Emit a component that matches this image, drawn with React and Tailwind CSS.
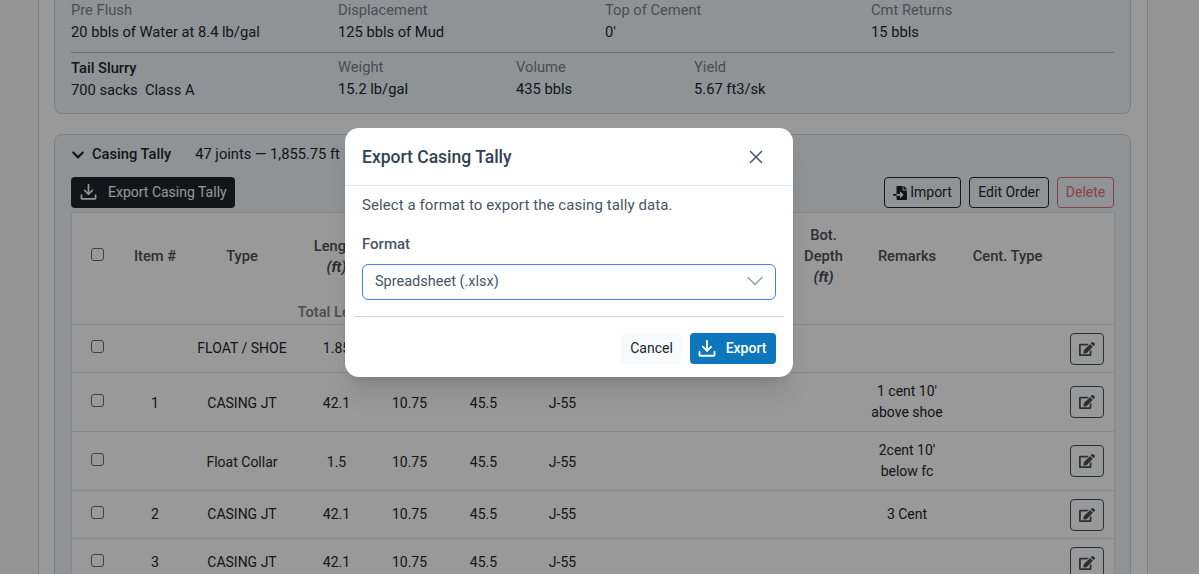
import { FaChevronDown, FaFileImport, FaEdit } from "react-icons/fa";
import { X, ChevronDown } from "lucide-react";

function DownloadIcon({ className }) {
  return (
    <svg className={className} viewBox="0 0 24 24" fill="none" stroke="currentColor" strokeWidth="2.4" strokeLinecap="round" strokeLinejoin="round">
      <path d="M12 1v13" />
      <path d="M6.5 9l5.5 5.5 5.5-5.5" />
      <path d="M2 15.5v4.5a1 1 0 0 0 1 1h18a1 1 0 0 0 1-1v-4.5" />
    </svg>
  );
}

const rows = [
  { h: "h-[48px]", item: "", type: "FLOAT / SHOE", len: "1.85", od: "", wt: "", grade: "", remarks: [] },
  { h: "h-[59px]", item: "1", type: "CASING JT", len: "42.1", od: "10.75", wt: "45.5", grade: "J-55", remarks: ["1 cent 10'", "above shoe"], text: "pt-[2px]" },
  { h: "h-[59px]", item: "", type: "Float Collar", len: "1.5", od: "10.75", wt: "45.5", grade: "J-55", remarks: ["2cent 10'", "below fc"], text: "pt-[2px]" },
  { h: "h-[48px]", item: "2", type: "CASING JT", len: "42.1", od: "10.75", wt: "45.5", grade: "J-55", remarks: ["3 Cent"] },
  { h: "h-[48px]", item: "3", type: "CASING JT", len: "42.1", od: "10.75", wt: "45.5", grade: "J-55", remarks: [] },
];

function Check() {
  return <input type="checkbox" className="block appearance-none w-[13px] h-[13px] mx-auto mb-1 rounded-[3px] border border-[#6b6b6b] bg-white" />;
}

function Field({ label, value }) {
  return (
    <div>
      <div className="text-[#7d8288]">{label}</div>
      <div className="mt-[1px] text-[#212529]">{value}</div>
    </div>
  );
}

export default function App() {
  return (
    <div className="relative h-[574px] overflow-hidden bg-[#f8f9fa] text-sm leading-[21px] font-['Roboto',sans-serif]">
      <div className="ml-[38px] w-[1110px] h-full border-x border-[#d8d8d8] bg-white pl-[15px] pr-[16px]">
        {/* cement details */}
        <div className="border-x border-b border-[#ced4da] rounded-b-lg bg-[#eff5fa] px-4 pb-[12px] text-[14.7px]">
          <div className="grid grid-cols-[267px_267px_266px_1fr] pb-[9px] border-b border-[#adb5bd]">
            <Field label="Pre Flush" value="20 bbls of Water at 8.4 lb/gal" />
            <Field label="Displacement" value="125 bbls of Mud" />
            <Field label="Top of Cement" value="0'" />
            <Field label="Cmt Returns" value="15 bbls" />
          </div>
          <div className="grid grid-cols-[267px_178px_178px_1fr] pt-[4px]">
            <div className="pt-[1px] text-[#212529]">
              <div className="font-medium">Tail Slurry</div>
              <div className="mt-[1px] whitespace-pre">700 sacks  Class A</div>
            </div>
            <Field label="Weight" value="15.2 lb/gal" />
            <Field label="Volume" value="435 bbls" />
            <Field label="Yield" value="5.67 ft3/sk" />
          </div>
        </div>

        {/* casing tally */}
        <div className="mt-[20px] border border-[#ced4da] rounded-lg bg-[#eff5fa] px-4 pt-[9px]">
          <div className="flex items-center h-[21px] text-[14.7px] text-[#212529]">
            <FaChevronDown className="w-[14px] h-[14px] mr-[7px]" />
            <span className="font-medium">Casing Tally</span>
            <span className="ml-6">47 joints — 1,855.75 ft</span>
          </div>
          <div className="flex items-center mt-[12px] h-[31px]">
            <button className="flex items-center h-[31px] w-[164px] pl-[9px] rounded-[4px] bg-[#212529] text-[#f8f9fa]">
              <DownloadIcon className="w-[17px] h-[17px] mr-[11px]" />
              Export Casing Tally
            </button>
            <div className="ml-auto flex gap-2">
              <button className="flex items-center justify-center gap-[3px] w-[77px] h-[31px] rounded-[4px] border border-[#212529] text-[#212529]">
                <FaFileImport className="w-[14px] h-[14px]" />
                Import
              </button>
              <button className="w-[80px] h-[31px] rounded-[4px] border border-[#212529] text-[#212529]">Edit Order</button>
              <button className="w-[57px] h-[31px] rounded-[4px] border border-[#dc3545] text-[#dc3545] opacity-70">Delete</button>
            </div>
          </div>
          <table className="mt-1 w-[1043px] table-fixed border-collapse border-t border-r border-l border-[#dee2e6] bg-white text-center text-[#212529]">
            <colgroup>
              <col className="w-[52px]" />
              <col className="w-[63px]" />
              <col className="w-[111px]" />
              <col className="w-[78px]" />
              <col className="w-[68px]" />
              <col className="w-[80px]" />
              <col className="w-[78px]" />
              <col className="w-[188px]" />
              <col className="w-[68px]" />
              <col className="w-[99px]" />
              <col className="w-[102px]" />
              <col className="w-[56px]" />
            </colgroup>
            <thead className="text-[14.7px] text-[#495057]">
              <tr className="h-[88px]">
                <th className="font-medium"><Check /></th>
                <th className="font-medium">Item #</th>
                <th className="font-medium">Type</th>
                <th className="font-medium">Length<br /><i className="font-bold">(ft)</i></th>
                <th className="font-medium">OD</th>
                <th className="font-medium">Wt</th>
                <th className="font-medium">Grade</th>
                <th></th>
                <th className="font-medium">Bot.<br />Depth<br /><i className="font-bold">(ft)</i></th>
                <th className="font-medium">Remarks</th>
                <th className="font-medium">Cent. Type</th>
                <th></th>
              </tr>
              <tr className="h-[24px] border-b border-[#dee2e6]">
                <th colSpan={3}></th>
                <th className="font-medium text-[#7a8086] whitespace-nowrap">Total Length</th>
                <th colSpan={8}></th>
              </tr>
            </thead>
            <tbody>
              {rows.map((r, i) => (
                <tr key={i} className={`${r.h} border-b border-[#dee2e6]`}>
                  <td><Check /></td>
                  <td className={r.text}>{r.item}</td>
                  <td className={r.text}>{r.type}</td>
                  <td className={r.text}>{r.len}</td>
                  <td className={r.text}>{r.od}</td>
                  <td className={r.text}>{r.wt}</td>
                  <td className={r.text}>{r.grade}</td>
                  <td></td>
                  <td></td>
                  <td>
                    {r.remarks.map((t) => (
                      <div key={t}>{t}</div>
                    ))}
                  </td>
                  <td></td>
                  <td>
                    <button className="flex items-center justify-center w-[34px] h-[32px] ml-[11px] rounded-[4px] border border-[#495057] text-[#495057]">
                      <FaEdit className="w-4 h-4" />
                    </button>
                  </td>
                </tr>
              ))}
            </tbody>
          </table>
        </div>
      </div>

      {/* backdrop */}
      <div className="absolute inset-0 bg-black/40" />

      {/* export modal */}
      <div className="absolute left-[345px] top-[128px] w-[448px] h-[249px] rounded-[14px] bg-white shadow-xl">
        <div className="flex items-center justify-between h-[58px] pl-[17px] pr-[26px] border-b border-[#e2e8f0]">
          <h2 className="pt-[2px] text-[17.5px] font-medium text-[#334155]">Export Casing Tally</h2>
          <X className="w-[22px] h-[22px] text-[#475569]" strokeWidth={1.6} />
        </div>
        <div className="px-[17px]">
          <p className="mt-[9px] text-[15px] leading-[21px] tracking-[0.08px] text-[#475569]">Select a format to export the casing tally data.</p>
          <label className="block mt-[18px] font-medium text-[15px] leading-[21px] text-[#475569]">Format</label>
          <div className="flex items-center justify-between mt-[9px] h-[36px] pl-[12px] pr-[6px] pb-[2px] rounded-md border border-[#3b82f6] text-[14.5px] text-[#475569]">
            <span>Spreadsheet (.xlsx)</span>
            <ChevronDown className="w-[28px] h-[28px] text-[#94a3b8]" strokeWidth={1.4} />
          </div>
        </div>
        <div className="mx-[9px] mt-4 border-t border-[#cbd5e1]" />
        <div className="flex justify-end gap-2 mt-4 px-[17px]">
          <button className="w-[61px] h-[31px] rounded-[4px] bg-[#f8fafc] text-[#212529]">Cancel</button>
          <button className="flex items-center justify-center gap-[10px] w-[86px] h-[31px] pr-[2px] rounded-[4px] bg-[#0e76bc] text-white font-medium">
            <DownloadIcon className="w-[18px] h-[18px]" />
            Export
          </button>
        </div>
      </div>
    </div>
  );
}
